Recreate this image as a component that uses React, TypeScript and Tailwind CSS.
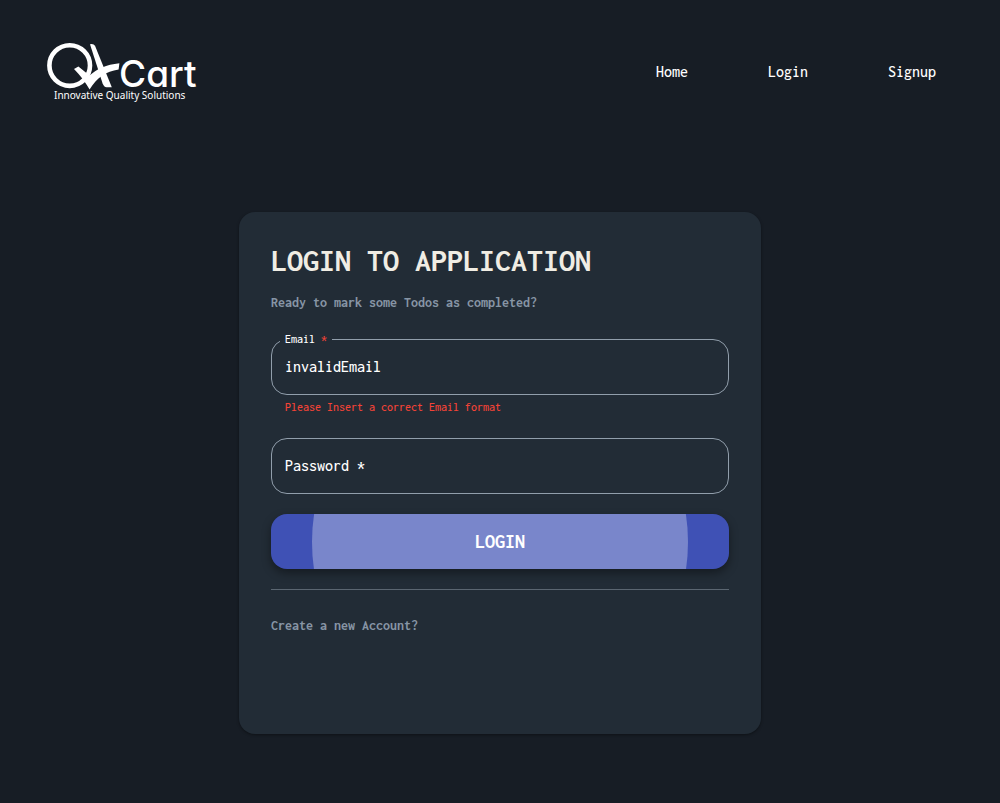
import { useState } from "react";

const links = ["Home", "Login", "Signup"];

function Logo() {
  return (
    <svg width="165" height="74" viewBox="0 0 165 74" role="img" aria-label="QACart" className="block">
      <circle cx="29.7" cy="30.6" r="20.3" fill="none" stroke="#fff" strokeWidth="4.6" />
      <path d="M50 9.2Q53.5 8.4 55 10.8L71.8 52.3H66.5Q64 52 62.6 48.5Z" fill="#fff" />
      <path d="M34 34L38.4 31.6L49.5 40.6C57 33.8 66 29.6 79.4 28.2L78.6 34.4C66 36.2 56.5 42.5 49.6 54.6C45.5 47.5 40.5 40.5 34 34Z" fill="#fff" />
      <text x="79" y="52" className="font-['Inter',sans-serif] text-[37px] font-medium [font-feature-settings:'cv11']" fill="#fff">Cart</text>
      <text x="14" y="64" className="font-['Noto_Sans',sans-serif] text-[10px]" fill="#fff">Innovative Quality Solutions</text>
    </svg>
  );
}

export default function App() {
  const [email, setEmail] = useState("invalidEmail");
  const [password, setPassword] = useState("");
  return (
    <div className="flex min-h-screen flex-col bg-[#171d25] font-['Inconsolata','Noto_Sans_Mono_CJK_SC','Liberation_Mono',monospace] text-base text-white">
      <header className="flex items-center justify-between pt-[35px] pr-16 pl-10">
        <a href="#home"><Logo /></a>
        <nav className="flex gap-20">
          {links.map((l) => (
            <a key={l} href={"#" + l.toLowerCase()} className="font-medium">{l}</a>
          ))}
        </nav>
      </header>
      <main className="flex justify-center px-4 pt-[103px] pb-16">
        <section className="min-h-[522px] w-full max-w-[522px] rounded-2xl bg-[#222c36] p-8 shadow-[0_1px_3px_rgba(0,0,0,0.4)]">
          <h1 className="text-[32px] leading-[34px] font-bold text-[#f0ede4]">LOGIN TO APPLICATION</h1>
          <p className="mt-[15px] text-sm leading-5 font-bold text-[#8795a5]">Ready to mark some Todos as completed?</p>
          <form onSubmit={(e) => e.preventDefault()}>
            <div className="relative mt-[26px]">
              <input
                id="email"
                value={email}
                onChange={(e) => setEmail(e.target.value)}
                aria-describedby="email-error"
                className="block h-14 w-full rounded-2xl border border-[#919eab] bg-transparent px-[13px] pb-0.5 font-medium outline-none"
              />
              <label htmlFor="email" className="absolute -top-2 left-[9px] bg-[#222c36] px-[5px] text-xs leading-4 font-medium">
                Email <span className="text-[#f44336]">*</span>
              </label>
            </div>
            <p id="email-error" className="mt-1 ml-3.5 text-xs leading-4 font-medium text-[#f44336]">Please Insert a correct Email format</p>
            <div className="mt-[23px]">
              <input
                type="password"
                value={password}
                onChange={(e) => setPassword(e.target.value)}
                aria-label="Password"
                placeholder="Password *"
                className="block h-14 w-full rounded-2xl border border-[#919eab] bg-transparent px-[13px] pb-0.5 font-medium outline-none placeholder:text-white placeholder:opacity-100"
              />
            </div>
            <button
              type="submit"
              className="relative mt-5 flex h-[55px] w-full items-center justify-center overflow-hidden rounded-2xl bg-[#3f51b5] text-xl font-bold shadow-[0_4px_10px_rgba(0,0,0,0.4)]"
            >
              <span className="absolute size-94 rounded-full bg-[#7986cb]" />
              <span className="relative">LOGIN</span>
            </button>
          </form>
          <hr className="mt-5 border-[#5b6671]" />
          <a href="#signup" className="mt-[26px] block text-sm leading-5 font-bold text-[#8795a5]">Create a new Account?</a>
        </section>
      </main>
    </div>
  );
}
